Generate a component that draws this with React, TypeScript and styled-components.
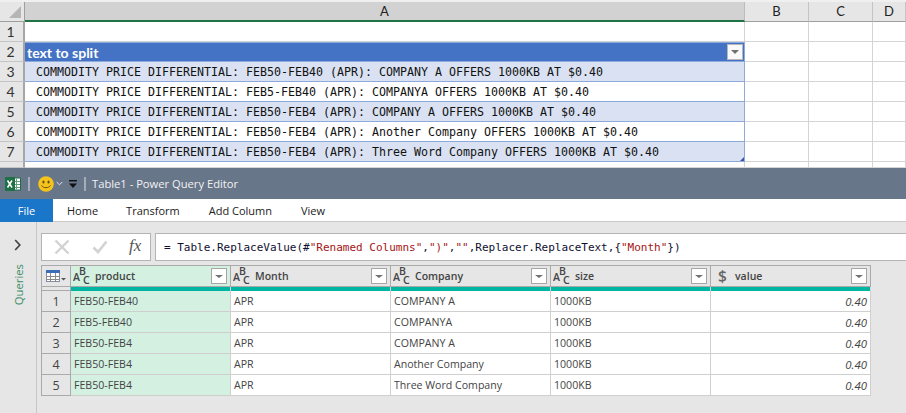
import React from "react";
import styled, { createGlobalStyle } from "styled-components";

const Global = createGlobalStyle`
  html, body { margin: 0; padding: 0; background: #e6e6e6; }
  * { box-sizing: border-box; }
`;

const Page = styled.div`
  width: 906px;
  height: 413px;
  overflow: hidden;
  display: flex;
  flex-direction: column;
  font-family: "Open Sans", "Noto Sans", sans-serif;
`;

const Sheet = styled.div`
  height: 168px;
  padding-top: 2px;
  background: #f0f0f0;
  display: grid;
  grid-template-columns: 25px 720px 64px 64px 33px;
  grid-template-rows: 20px repeat(7, 20px) 6px;
  overflow: hidden;
`;

const Corner = styled.div`
  background: #e6e6e6;
  border-right: 1px solid #9f9f9f;
  border-bottom: 1px solid #9f9f9f;
  position: relative;
  &::after {
    content: "";
    position: absolute;
    right: 3px;
    bottom: 3px;
    border-style: solid;
    border-width: 0 0 12px 12px;
    border-color: transparent transparent #b5b5b5 transparent;
  }
`;

const ColHead = styled.div<{ $active?: boolean }>`
  background: ${(p) => (p.$active ? "#d2d2d2" : "#e6e6e6")};
  border-right: 1px solid ${(p) => (p.$active ? "#bcbcbc" : "#c4c4c4")};
  border-bottom: ${(p) => (p.$active ? "2px solid #217346" : "1px solid #9f9f9f")};
  font-family: "Lato", "Liberation Sans", sans-serif;
  font-size: 13px;
  color: #222;
  display: flex;
  align-items: center;
  justify-content: center;
  padding-bottom: 1px;
`;

const RowHead = styled.div`
  background: #e6e6e6;
  border-right: 2px solid #a6a6a6;
  border-bottom: 1px solid #c4c4c4;
  font-family: "Lato", "Liberation Sans", sans-serif;
  font-size: 14px;
  color: #333;
  display: flex;
  align-items: center;
  justify-content: center;
  padding-right: 2px;
`;

const Cell = styled.div`
  background: #fff;
  border-right: 1px solid #d4d4d4;
  border-bottom: 1px solid #d4d4d4;
`;

const TableHead = styled.div`
  background: #4472c4;
  color: #fff;
  font-family: "Lato", "Liberation Sans", sans-serif;
  font-weight: 700;
  font-size: 14px;
  display: flex;
  align-items: center;
  justify-content: space-between;
  padding: 0 1px 0 2px;
  border-top: 1px solid #8ea9db;
  border-bottom: 1px solid #8ea9db;
  border-right: 1px solid #8ea9db;
`;

const SheetFilter = styled.div`
  width: 16px;
  height: 16px;
  background: #fafafa;
  border: 1px solid #b8b8b8;
  display: flex;
  align-items: center;
  justify-content: center;
  &::after {
    content: "";
    border-style: solid;
    border-width: 4px 4px 0 4px;
    border-color: #707070 transparent transparent transparent;
  }
`;

const DataCell = styled.div<{ $band: boolean }>`
  background: ${(p) => (p.$band ? "#d9e1f2" : "#fff")};
  border-right: 1px solid #8ea9db;
  border-bottom: 1px solid #8ea9db;
  font-family: "DejaVu Sans Mono", "Liberation Mono", monospace;
  font-size: 11.63px;
  color: #111;
  white-space: pre;
  padding-left: 11px;
  display: flex;
  align-items: center;
  position: relative;
`;

const ResizeHandle = styled.div`
  position: absolute;
  right: 0;
  bottom: 0;
  border-style: solid;
  border-width: 0 0 4px 4px;
  border-color: transparent transparent #3a56a8 transparent;
`;

const TitleBar = styled.div`
  height: 31px;
  background: #68768a;
  display: flex;
  align-items: center;
  padding-left: 5px;
  color: #f2f2f2;
  font-size: 11.2px;
  flex: none;
`;

const TitleDivider = styled.div<{ $left: number }>`
  width: 2px;
  height: 14px;
  background: #a3adbb;
  margin-left: ${(p) => p.$left}px;
`;

const TitleText = styled.span`
  margin-left: 6px;
`;

const Tabs = styled.div`
  height: 23px;
  flex: none;
  background: #fff;
  display: flex;
  align-items: center;
  font-size: 11px;
  color: #222;
  border-bottom: 1px solid #c9c9c9;
`;

const FileTab = styled.div`
  width: 53px;
  height: 23px;
  background: #1976c9;
  color: #fff;
  display: flex;
  align-items: center;
  justify-content: center;
`;

const Tab = styled.div<{ $gap: number }>`
  margin-left: ${(p) => p.$gap}px;
  padding-top: 1px;
`;

const Body = styled.div`
  flex: 1;
  min-height: 0;
  display: flex;
  background: #e6e6e6;
`;

const QueriesPane = styled.div`
  width: 37px;
  flex: none;
  border-right: 1px solid #c6c6c6;
  display: flex;
  flex-direction: column;
  align-items: center;
  padding-top: 17px;
  gap: 13px;
`;

const QueriesLabel = styled.div`
  writing-mode: vertical-rl;
  transform: rotate(180deg);
  color: #3d8f68;
  font-size: 11.3px;
`;

const Main = styled.div`
  flex: 1;
  min-width: 0;
  padding: 11px 0 0 4px;
  display: flex;
  flex-direction: column;
  gap: 4px;
`;

const FormulaRow = styled.div`
  display: flex;
  height: 28px;
  gap: 4px;
  flex: none;
`;

const FormulaButtons = styled.div`
  width: 110px;
  background: #fff;
  border: 1px solid #b4b4b4;
  display: flex;
  align-items: center;
  padding-left: 12px;
  gap: 22px;
`;

const Fx = styled.span`
  font-family: "Liberation Serif", serif;
  font-style: italic;
  font-size: 17px;
  color: #555;
  margin-top: -2px;
  margin-left: -1px;
`;

const FormulaInput = styled.div`
  flex: 1;
  background: #fff;
  border-top: 1px solid #b4b4b4;
  border-bottom: 1px solid #b4b4b4;
  border-left: 1px solid #b4b4b4;
  font-family: "DejaVu Sans Mono", "Liberation Mono", monospace;
  font-size: 11px;
  color: #101030;
  white-space: pre;
  display: flex;
  align-items: center;
  padding-left: 8px;
`;

const Str = styled.span`
  color: #a31515;
`;

const Grid = styled.div`
  width: 830px;
  border-left: 1px solid #aaa;
  border-top: 1px solid #aaa;
  display: grid;
  grid-template-columns: 29px repeat(5, 160px);
  grid-template-rows: 21px 4px repeat(5, 21px);
  font-size: 10.6px;
  color: #444;
`;

const SelectAll = styled.div`
  background: #e6e6e6;
  border-right: 1px solid #aaa;
  border-bottom: 1px solid #aaa;
  display: flex;
  align-items: center;
  justify-content: center;
`;

const HeadCell = styled.div<{ $selected?: boolean }>`
  background: ${(p) => (p.$selected ? "#d3f0e1" : "#e6e6e6")};
  border-right: 1px solid #aaa;
  border-bottom: 1px solid #aaa;
  display: flex;
  align-items: center;
  padding: 0 2px;
  font-weight: 600;
  font-size: 10.5px;
  color: #444;
`;

const HeadName = styled.span<{ $wide?: boolean }>`
  flex: 1;
  margin-left: ${(p) => (p.$wide ? 4 : 0)}px;
`;

const FilterBtn = styled.div`
  width: 16px;
  height: 16px;
  margin-right: 1px;
  background: #fff;
  border: 1px solid #a6a6a6;
  display: flex;
  align-items: center;
  justify-content: center;
  &::after {
    content: "";
    border-style: solid;
    border-width: 3px 4px 0 4px;
    border-color: #707070 transparent transparent transparent;
  }
`;

const IndexStrip = styled.div`
  background: #e6e6e6;
  border-right: 1px solid #aaa;
  border-bottom: 1px solid #aaa;
`;

const QualityBar = styled.div`
  background: #00b6a2;
  border-right: 1px solid #d8d8d8;
`;

const IndexCell = styled.div`
  background: #e6e6e6;
  border-right: 1px solid #aaa;
  border-bottom: 1px solid #aaa;
  font-size: 12.5px;
  color: #444;
  display: flex;
  align-items: center;
  justify-content: center;
`;

const Td = styled.div<{ $selected?: boolean; $num?: boolean }>`
  background: ${(p) => (p.$selected ? "#d3f0e1" : "#fff")};
  border-right: 1px solid #cfcfcf;
  border-bottom: 1px solid #cfcfcf;
  display: flex;
  align-items: center;
  padding: 0 3px;
  ${(p) => p.$num && "justify-content: flex-end; font-style: italic; font-size: 11.4px;"}
`;

const AbcIcon = () => (
  <svg width="22" height="20" viewBox="0 0 22 20" style={{ flex: "none" }}>
    <g fontFamily="'Open Sans', sans-serif" fontSize="10.5" fill="#444">
      <text x="0" y="15">A</text>
      <text x="6" y="9">B</text>
      <text x="10" y="18">C</text>
    </g>
  </svg>
);

const DollarIcon = () => (
  <svg width="14" height="20" viewBox="0 0 14 20" style={{ flex: "none", marginLeft: 4 }}>
    <text x="1" y="15.5" fontFamily="'Open Sans', sans-serif" fontSize="15.5" fill="#666">$</text>
  </svg>
);

const TableIcon = () => (
  <svg width="20" height="12" viewBox="0 0 20 12">
    <rect x="0.5" y="0.5" width="13" height="11" fill="#fff" stroke="#7f8ea5" />
    <rect x="0" y="0" width="14" height="3" fill="#3b6cb5" />
    <path d="M0 6.5H14M0 9.5H14M4.5 3V12M9.5 3V12" stroke="#8a8a8a" />
    <path d="M15 8h5l-2.5 2.5z" fill="#555" />
  </svg>
);

const ExcelIcon = () => (
  <svg width="16" height="14" viewBox="0 0 16 14">
    <rect x="7" y="1" width="8.5" height="12" fill="#fff" stroke="#1f6e43" />
    <path d="M11.5 1.5v11M7 4.5h8M7 7.5h8M7 10.5h8" stroke="#5f9d7b" />
    <rect x="0" y="0" width="10" height="14" rx="1" fill="#1e7145" />
    <path d="M2.5 3.5l4.5 7M7 3.5l-4.5 7" stroke="#fff" strokeWidth="1.5" />
  </svg>
);

const Smiley = () => (
  <svg width="16" height="16" viewBox="0 0 17 17" style={{ marginLeft: 8 }}>
    <circle cx="8.5" cy="8.5" r="8.3" fill="#f6c31c" />
    <ellipse cx="5.8" cy="6.3" rx="1.1" ry="1.6" fill="#5a4a10" />
    <ellipse cx="11.2" cy="6.3" rx="1.1" ry="1.6" fill="#5a4a10" />
    <path d="M3.8 10c1.5 3.2 7.9 3.2 9.4 0" fill="none" stroke="#5a4a10" strokeWidth="1" />
  </svg>
);

const Chevron = () => (
  <svg width="7" height="5" viewBox="0 0 7 5" style={{ marginLeft: 2 }}>
    <path d="M0.7 1l2.8 2.8L6.3 1" fill="none" stroke="#e2e6ea" strokeWidth="1" />
  </svg>
);

const QatMenu = () => (
  <svg width="10" height="10" viewBox="0 0 10 10" style={{ margin: "1px 0 0 5px" }}>
    <rect x="1" y="1" width="8" height="1.4" fill="#111" />
    <path d="M1 4.5h8L5 9z" fill="#111" />
  </svg>
);

const CancelIcon = () => (
  <svg width="16" height="16" viewBox="0 0 16 16">
    <path d="M1.5 1.5l13 13M14.5 1.5l-13 13" stroke="#d2d2d2" strokeWidth="2.4" />
  </svg>
);

const CheckIcon = () => (
  <svg width="16" height="14" viewBox="0 0 16 14">
    <path d="M1.5 7.5l4.5 4.5L14.5 1.5" fill="none" stroke="#d2d2d2" strokeWidth="2.6" />
  </svg>
);

const ChevronRight = () => (
  <svg width="8" height="12" viewBox="0 0 8 12">
    <path d="M1.2 1l4.6 5-4.6 5" fill="none" stroke="#444" strokeWidth="1.7" />
  </svg>
);

const sheetRows = [
  "COMMODITY PRICE DIFFERENTIAL: FEB50-FEB40 (APR): COMPANY A OFFERS 1000KB AT $0.40",
  "COMMODITY PRICE DIFFERENTIAL: FEB5-FEB40 (APR): COMPANYA OFFERS 1000KB AT $0.40",
  "COMMODITY PRICE DIFFERENTIAL: FEB50-FEB4 (APR): COMPANY A OFFERS 1000KB AT $0.40",
  "COMMODITY PRICE DIFFERENTIAL: FEB50-FEB4 (APR): Another Company OFFERS 1000KB AT $0.40",
  "COMMODITY PRICE DIFFERENTIAL: FEB50-FEB4 (APR): Three Word Company OFFERS 1000KB AT $0.40",
];

const dataRows = [
  ["FEB50-FEB40", "APR", "COMPANY A", "1000KB", "0.40"],
  ["FEB5-FEB40", "APR", "COMPANYA", "1000KB", "0.40"],
  ["FEB50-FEB4", "APR", "COMPANY A", "1000KB", "0.40"],
  ["FEB50-FEB4", "APR", "Another Company", "1000KB", "0.40"],
  ["FEB50-FEB4", "APR", "Three Word Company", "1000KB", "0.40"],
];

const columns = ["product", "Month", "Company", "size", "value"];

const BlankCells = () => (
  <>
    <Cell />
    <Cell />
    <Cell />
  </>
);

export default function App() {
  return (
    <Page>
      <Global />
      <Sheet>
        <Corner />
        <ColHead $active>A</ColHead>
        <ColHead>B</ColHead>
        <ColHead>C</ColHead>
        <ColHead>D</ColHead>

        <RowHead>1</RowHead>
        <Cell />
        <BlankCells />

        <RowHead>2</RowHead>
        <TableHead>
          text to split
          <SheetFilter />
        </TableHead>
        <BlankCells />

        {sheetRows.map((text, i) => (
          <React.Fragment key={i}>
            <RowHead>{i + 3}</RowHead>
            <DataCell $band={i % 2 === 0}>
              {text}
              {i === sheetRows.length - 1 && <ResizeHandle />}
            </DataCell>
            <BlankCells />
          </React.Fragment>
        ))}

        <RowHead />
        <Cell />
        <BlankCells />
      </Sheet>

      <TitleBar>
        <ExcelIcon />
        <TitleDivider $left={7} />
        <Smiley />
        <Chevron />
        <QatMenu />
        <TitleDivider $left={6} />
        <TitleText>Table1 - Power Query Editor</TitleText>
      </TitleBar>

      <Tabs>
        <FileTab>File</FileTab>
        <Tab $gap={14}>Home</Tab>
        <Tab $gap={28}>Transform</Tab>
        <Tab $gap={29}>Add Column</Tab>
        <Tab $gap={29}>View</Tab>
      </Tabs>

      <Body>
        <QueriesPane>
          <ChevronRight />
          <QueriesLabel>Queries</QueriesLabel>
        </QueriesPane>
        <Main>
          <FormulaRow>
            <FormulaButtons>
              <CancelIcon />
              <CheckIcon />
              <Fx>fx</Fx>
            </FormulaButtons>
            <FormulaInput>
              = Table.ReplaceValue(#<Str>"Renamed Columns"</Str>,<Str>")"</Str>,<Str>""</Str>,Replacer.ReplaceText,{"{"}<Str>"Month"</Str>{"}"})
            </FormulaInput>
          </FormulaRow>

          <Grid>
            <SelectAll>
              <TableIcon />
            </SelectAll>
            {columns.map((c, i) => (
              <HeadCell key={c} $selected={i === 0}>
                {c === "value" ? <DollarIcon /> : <AbcIcon />}
                <HeadName $wide={c === "value"}>{c}</HeadName>
                <FilterBtn />
              </HeadCell>
            ))}
            <IndexStrip />
            {columns.map((c) => (
              <QualityBar key={c} />
            ))}
            {dataRows.map((row, r) => (
              <React.Fragment key={r}>
                <IndexCell>{r + 1}</IndexCell>
                {row.map((v, i) => (
                  <Td key={i} $selected={i === 0} $num={i === 4}>
                    {v}
                  </Td>
                ))}
              </React.Fragment>
            ))}
          </Grid>
        </Main>
      </Body>
    </Page>
  );
}
